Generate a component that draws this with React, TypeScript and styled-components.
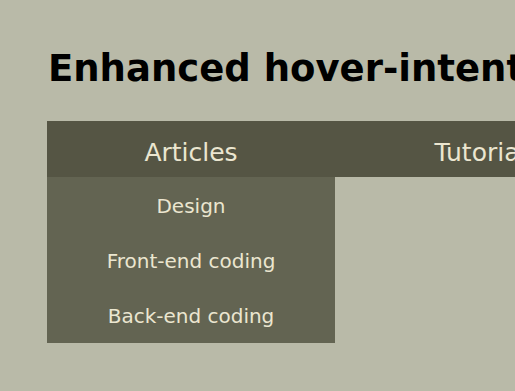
import React from "react";
import styled, { createGlobalStyle } from "styled-components";

const Global = createGlobalStyle`
  html, body { margin: 0; padding: 0; }
  body {
    background: #b9baa8;
    font-family: "DejaVu Sans", Verdana, sans-serif;
  }
`;

const Page = styled.div`
  padding: 0 0 0 47px;
  min-height: 100vh;
  box-sizing: border-box;
  overflow: hidden;
`;

const Title = styled.h1`
  margin: 0;
  padding: 47px 0 0 1px;
  height: 121px;
  box-sizing: border-box;
  font-size: 37px;
  line-height: 44px;
  font-weight: bold;
  color: #000;
  white-space: nowrap;
`;

const Nav = styled.ul`
  list-style: none;
  margin: 0;
  padding: 0;
  display: flex;
  background: #555544;
`;

const NavItem = styled.li<{ $width: number }>`
  position: relative;
  width: ${(p) => p.$width}px;
  flex: none;
`;

const NavLink = styled.a`
  display: block;
  height: 56px;
  line-height: 64px;
  text-align: center;
  font-size: 25px;
  color: #ebe6d0;
  text-decoration: none;
  white-space: nowrap;
`;

const Dropdown = styled.ul`
  position: absolute;
  left: 0;
  top: 56px;
  width: 288px;
  margin: 0;
  padding: 0 0 1px;
  list-style: none;
  background: #636452;
  z-index: 1;
`;

const DropItem = styled.li`
  height: 55px;
  line-height: 59px;
  text-align: center;
  font-size: 20px;
  color: #ebe6d0;
  white-space: nowrap;
`;

export default function App() {
  return (
    <>
      <Global />
      <Page>
        <Title>Enhanced hover-intent menus</Title>
        <Nav>
          <NavItem $width={288}>
            <NavLink href="#">Articles</NavLink>
            <Dropdown>
              <DropItem>Design</DropItem>
              <DropItem>Front-end coding</DropItem>
              <DropItem>Back-end coding</DropItem>
            </Dropdown>
          </NavItem>
          <NavItem $width={304}>
            <NavLink href="#">Tutorials</NavLink>
          </NavItem>
        </Nav>
      </Page>
    </>
  );
}
